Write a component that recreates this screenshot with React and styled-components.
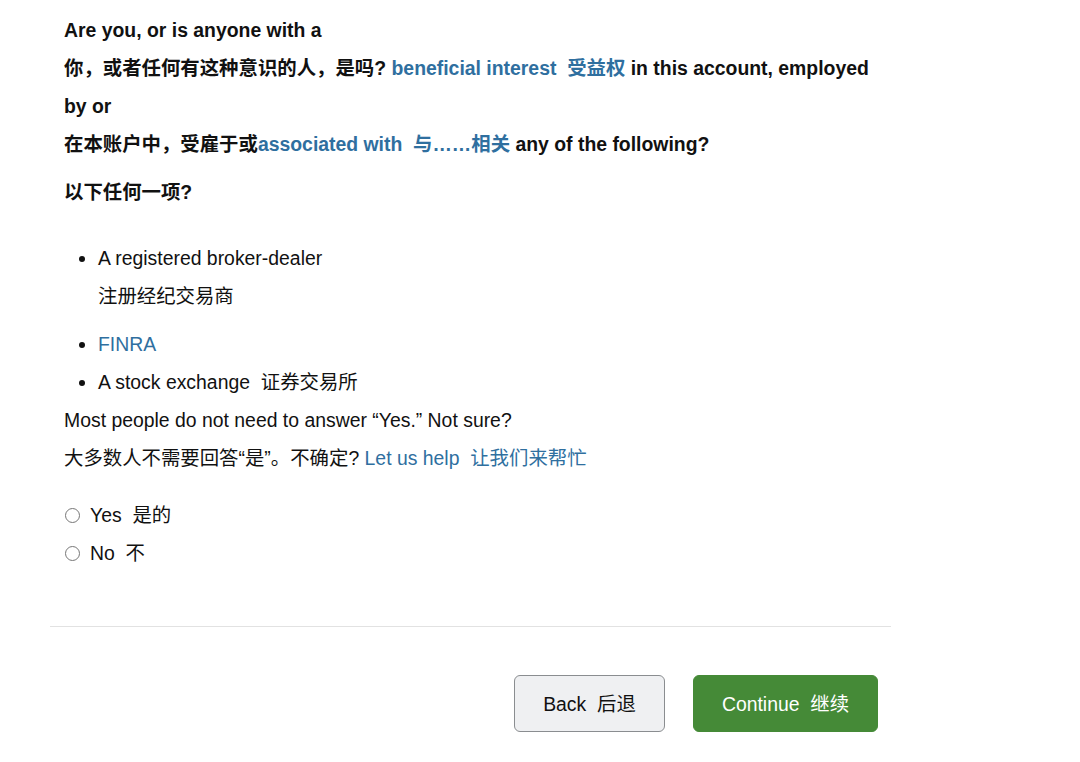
import React from "react";
import styled, { createGlobalStyle } from "styled-components";

const Global = createGlobalStyle`
  html, body { margin: 0; padding: 0; background: #fff; }
  body {
    font-family: "Liberation Sans", Arial, "Noto Sans CJK SC", sans-serif;
    color: #111;
    font-size: 19.4px;
  }
`;

const Page = styled.div`
  width: 841px;
  margin-left: 50px;
  padding-top: 11px;
`;

const Content = styled.div`
  padding-left: 14px;
`;

const Legend = styled.div`
  font-weight: 700;
  line-height: 38px;
`;

const Line = styled.div`
  margin-top: ${(p) => p.$gap || 0}px;
`;

const Link = styled.a`
  color: #2f6f9f;
  text-decoration: none;
  font-weight: inherit;
  cursor: pointer;
`;

const List = styled.ul`
  margin: 28px 0 0 0;
  padding-left: 34px;
  line-height: 38px;
`;

const Item = styled.li`
  list-style: disc;
`;

const SubLine = styled.div`
  margin-bottom: 10px;
`;

const Para = styled.div`
  line-height: 38px;
`;

const Radios = styled.div`
  margin-top: 19px;
  display: flex;
  flex-direction: column;
`;

const RadioLabel = styled.label`
  display: flex;
  align-items: center;
  height: 38px;
  line-height: 38px;
  cursor: pointer;
`;

const Radio = styled.input.attrs({ type: "radio" })`
  width: 15px;
  height: 15px;
  margin: 0 10px 0 1px;
  accent-color: #555;
`;

const Divider = styled.hr`
  margin: 54px 0 0 0;
  border: none;
  border-top: 1px solid #e2e2e2;
`;

const ButtonRow = styled.div`
  display: flex;
  justify-content: flex-end;
  gap: 28px;
  margin-top: 48px;
  padding-right: 13px;
`;

const Button = styled.button`
  height: 57px;
  width: ${(p) => p.$w}px;
  padding: 0 0 3px;
  border-radius: 6px;
  font-family: inherit;
  font-size: 19.4px;
  cursor: pointer;
  border: 1px solid ${(p) => (p.$primary ? "#458a37" : "#8a8d90")};
  background: ${(p) => (p.$primary ? "#458a37" : "#eff0f2")};
  color: ${(p) => (p.$primary ? "#fff" : "#111")};
`;

export default function App() {
  return (
    <>
      <Global />
      <Page>
        <Content>
          <Legend>
            <Line>Are you, or is anyone with a</Line>
            <Line>
              你，或者任何有这种意识的人，是吗?{" "}
              <Link>beneficial interest{"\u00a0 "}受益权</Link> in this account,
              employed
            </Line>
            <Line>by or</Line>
            <Line>
              在本账户中，受雇于或<Link>associated with{"\u00a0 "}与……相关</Link>{" "}
              any of the following?
            </Line>
            <Line $gap={10}>以下任何一项?</Line>
          </Legend>
          <List>
            <Item>
              A registered broker-dealer
              <SubLine>注册经纪交易商</SubLine>
            </Item>
            <Item>
              <Link>FINRA</Link>
            </Item>
            <Item>A stock exchange{"\u00a0 "}证券交易所</Item>
          </List>
          <Para>Most people do not need to answer “Yes.” Not sure?</Para>
          <Para>
            大多数人不需要回答“是”。不确定?{" "}
            <Link>Let us help{"\u00a0 "}让我们来帮忙</Link>
          </Para>
          <Radios>
            <RadioLabel>
              <Radio name="answer" />
              Yes{"\u00a0 "}是的
            </RadioLabel>
            <RadioLabel>
              <Radio name="answer" />
              No{"\u00a0 "}不
            </RadioLabel>
          </Radios>
        </Content>
        <Divider />
        <ButtonRow>
          <Button $w={151}>Back{"\u00a0 "}后退</Button>
          <Button $w={185} $primary>
            Continue{"\u00a0 "}继续
          </Button>
        </ButtonRow>
      </Page>
    </>
  );
}
